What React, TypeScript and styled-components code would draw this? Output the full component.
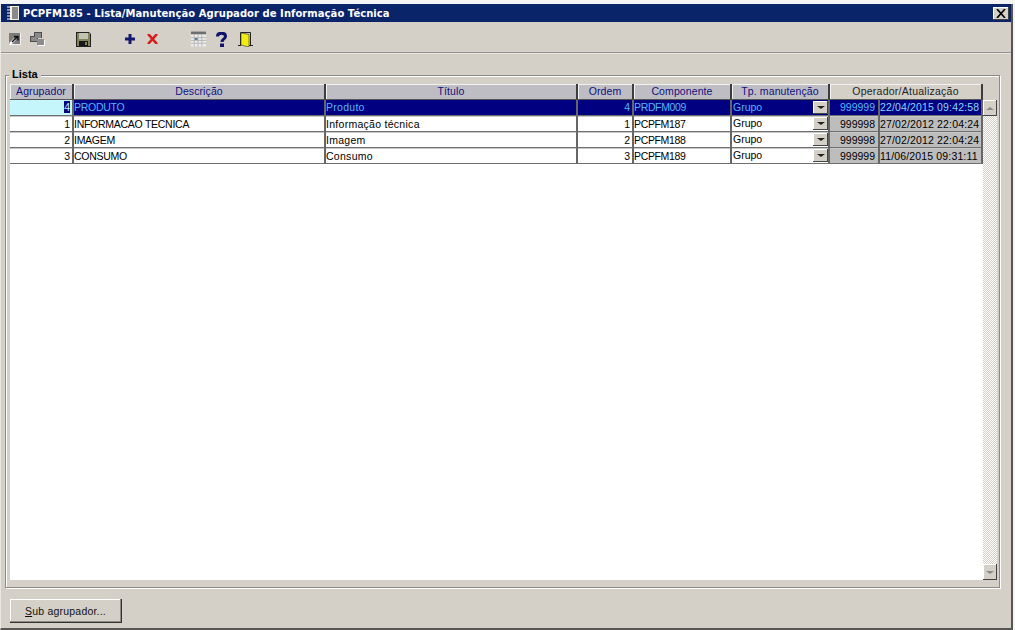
import React from "react";
import styled, { createGlobalStyle } from "styled-components";

const Global = createGlobalStyle`
  html, body { margin: 0; padding: 0; background: #f4f4f4; }
  body { width: 1015px; height: 630px; overflow: hidden; font-family: "Liberation Sans", Arial, sans-serif; }
`;

const Screen = styled.div`
  width: 1015px; height: 630px; display: flex; flex-direction: column;
  box-sizing: border-box; padding-top: 4px; background: #f4f4f4;
`;
const Window = styled.div`
  width: 1013px; height: 626px; box-sizing: border-box; display: flex; flex-direction: column;
  border-right: 2px solid #555; border-bottom: 2px solid #555; border-left: 1px solid #e8e6e0;
  background: #d4d0c8;
`;
const TitleBar = styled.div`
  height: 18px; flex: none; display: flex; align-items: center; gap: 3px; padding: 0 2px 0 6px;
  background: #0a246a; color: #fff; font: bold 10px "DejaVu Sans", sans-serif;
`;
const TitleText = styled.span` flex: 1; white-space: nowrap; letter-spacing: 0.05px; `;
const CloseButton = styled.div`
  width: 16px; height: 13px; display: flex; align-items: center; justify-content: center;
  background: #d4d0c8; box-shadow: inset -1px -1px 0 #404040, inset 1px 1px 0 #fff;
`;
const Toolbar = styled.div`
  height: 26px; flex: none; display: flex; align-items: center; padding: 4px 0 0 6px;
  border-bottom: 2px groove #e8e6e0; box-sizing: content-box;
`;
const ToolIcon = styled.span<{ $gap?: number }>`
  display: flex; width: 15px; height: 16px; align-items: center; justify-content: center;
  margin-left: ${p => p.$gap ?? 0}px;
`;
const Body = styled.div`
  flex: 1; min-height: 0; display: flex; flex-direction: column; padding: 21px 11px 0 4px;
`;
const Group = styled.div`
  flex: 1; min-height: 0; padding: 8px 2px 7px 4px; display: flex; flex-direction: column; position: relative;
  border: 1px solid #8c8a84; box-shadow: 1px 1px 0 #fff, inset 1px 1px 0 #fff;
`;
const Legend = styled.span`
  position: absolute; top: -7px; left: 3px; padding: 0 3px; background: #d4d0c8;
  font: bold 11px/11px "Liberation Sans", sans-serif; color: #000;
`;
const Grid = styled.div` flex: 1; min-height: 0; display: flex; flex-direction: column; position: relative; `;
const Rows = styled.div` flex: 1; min-height: 0; background: #fff; `;
const Row = styled.div`
  display: grid; height: 16px;
  grid-template-columns: 64px 252px 252px 56px 98px 98px 50px 103px;
`;
const Head = styled.div<{ $plain?: boolean }>`
  background: ${p => (p.$plain ? "#d4d0c8" : "#bfbdc4")};
  color: ${p => (p.$plain ? "#222" : "#10107c")};
  font-size: 10.5px; line-height: 15px; text-align: center; white-space: nowrap; letter-spacing: 0.1px;
  border-right: 2px solid #3c3c3c; border-bottom: 1px solid #555; box-sizing: border-box;
  box-shadow: inset 1px 1px 0 #f2f2f2;
`;
const SpanHead = styled(Head)` grid-column: span 2; letter-spacing: 0.25px; `;
const Cell = styled.div<{ $right?: boolean; $sel?: boolean; $cur?: boolean; $ro?: boolean }>`
  box-sizing: border-box; white-space: nowrap; overflow: hidden; font-size: 10.5px;
  line-height: ${p => (p.$sel || p.$cur ? 15 : 16)}px;
  padding: 0 ${p => (p.$ro ? 3 : 2)}px 0 0; text-align: ${p => (p.$right ? "right" : "left")};
  color: ${p => (p.$sel ? "#58b4fa" : "#000")};
  background: ${p => (p.$cur ? "#c4f6fc" : p.$sel ? "#000080" : p.$ro ? "#bdbdbd" : "#fff")};
  border-right: 2px solid #666; border-bottom: 1px solid #707070;
  box-shadow: ${p => (p.$sel || p.$cur ? "none" : "inset 0 1px 0 #c8c8c8")};
`;
const CapsCell = styled(Cell)` letter-spacing: -0.27px; `;
const TextCell = styled(Cell)` letter-spacing: 0.28px; `;
const CodeCell = styled(Cell)` letter-spacing: -0.35px; `;
const DateCell = styled(Cell)` letter-spacing: 0.15px; padding-right: 0; color: ${p => (p.$sel ? "#8ad6ff" : "#000")}; `;
const LastDigit = styled.span` background: #000080; color: #c4f6fc; `;
const ComboCell = styled(Cell)`
  display: flex; justify-content: space-between; padding: 0 0 0 1px; line-height: 14px;
`;
const ComboButton = styled.span`
  width: 15px; height: 13px; margin-top: 1px; flex: none; display: flex; align-items: center; justify-content: center;
  background: #d4d0c8; box-shadow: inset -1px -1px 0 #444, inset 1px 1px 0 #fff;
`;
const Arrow = styled.span`
  width: 0; height: 0; border-left: 4px solid transparent; border-right: 4px solid transparent; border-top: 3px solid #222;
`;
const Scroll = styled.div`
  position: absolute; right: 0; top: 16px; bottom: 0; width: 14px;
  display: flex; flex-direction: column; justify-content: space-between;
  background: repeating-conic-gradient(#fff 0% 25%, #d4d0c8 0% 50%) 0 0 / 2px 2px;
`;
const ScrollButton = styled.span`
  height: 16px; display: flex; align-items: center; justify-content: center;
  background: #d4d0c8; box-shadow: inset -1px -1px 0 #444, inset 1px 1px 0 #fff;
`;
const ArrowUp = styled(Arrow)` border-top: 0; border-bottom: 3px solid #888; `;
const ArrowDown = styled(Arrow)` border-top-color: #888; `;
const Footer = styled.div` flex: none; height: 40px; box-sizing: border-box; padding: 11px 0 0 5px; `;
const Button = styled.button`
  display: block; width: 112px; height: 24px; padding: 0 1px 0 0; background: #d4d0c8; border: 0; color: #111;
  font: 10.5px "Liberation Sans", sans-serif; letter-spacing: 0.02em;
  box-shadow: inset -1px -1px 0 #333, inset -2px -2px 0 #8c8a84, inset 1px 1px 0 #fff;
`;
const Key = styled.span` text-decoration: underline; `;

const rows = [
  ["4", "PRODUTO", "Produto", "4", "PRDFM009", "999999", "22/04/2015 09:42:58"],
  ["1", "INFORMACAO TECNICA", "Informação técnica", "1", "PCPFM187", "999998", "27/02/2012 22:04:24"],
  ["2", "IMAGEM", "Imagem", "2", "PCPFM188", "999998", "27/02/2012 22:04:24"],
  ["3", "CONSUMO", "Consumo", "3", "PCPFM189", "999999", "11/06/2015 09:31:11"],
];

export default function App() {
  return (
    <Screen>
      <Global />
      <Window>
        <TitleBar>
          <svg width="13" height="16" viewBox="0 0 13 16">
            <rect x="2.500" y="0.500" width="10" height="15" fill="#f0f0e8" stroke="#222" />
            <path d="M5 3h6M5 5h6M5 7h6M5 9h6M5 11h6M5 13h6" stroke="#222" />
            <path d="M0 2h4M0 5h4M0 8h4M0 11h4M0 14h4" stroke="#fff" />
          </svg>
          <TitleText>PCPFM185 - Lista/Manutenção Agrupador de Informação Técnica</TitleText>
          <CloseButton>
            <svg width="10" height="9" viewBox="0 0 10 9"><path d="M1 0l8 9M9 0L1 9" stroke="#000" strokeWidth="1.7" /></svg>
          </CloseButton>
        </TitleBar>
        <Toolbar>
          <ToolIcon>
            <svg width="12" height="12" viewBox="0 0 12 12">
              <rect width="12" height="12" fill="#f0f0f0" />
              <rect width="11" height="11" fill="#7c7c7c" />
              <path d="M1 11L6 6" stroke="#fff" strokeWidth="2.500" />
              <path d="M3 9L8 4M5 3.500h4v4" stroke="#111" strokeWidth="1.500" fill="none" />
            </svg>
          </ToolIcon>
          <ToolIcon $gap={8}>
            <svg width="15" height="14" viewBox="0 0 15 14">
              <path d="M0 4h4V0h8v6H8v4H0z" fill="#4c4c4c" />
              <path d="M1 5h4V1h6v5H7v3H1z" fill="#8a8a8a" />
              <path d="M15 14H8v-1h6V8h1z" fill="#fff" />
              <rect x="7" y="7" width="7" height="6" fill="#8c8c8c" />
            </svg>
          </ToolIcon>
          <ToolIcon $gap={31}>
            <svg width="15" height="15" viewBox="0 0 15 15">
              <path d="M0 0h13l2 2v13H0z" fill="#222" />
              <rect x="1" y="1" width="13" height="13" fill="#84845a" />
              <rect x="3" y="1" width="9" height="6" fill="#c4c4b4" />
              <rect x="3" y="9" width="9" height="5" fill="#181818" />
              <rect x="9" y="10" width="2" height="3" fill="#84845a" />
            </svg>
          </ToolIcon>
          <ToolIcon $gap={31}>
            <svg width="10" height="10" viewBox="0 0 10 10"><path d="M5 0v10M0 5h10" stroke="#14186e" strokeWidth="3" /></svg>
          </ToolIcon>
          <ToolIcon $gap={8}>
            <svg width="11" height="10" viewBox="0 0 11 10"><path d="M1 0l9 10M10 0L1 10" stroke="#d81c1c" strokeWidth="2.600" /></svg>
          </ToolIcon>
          <ToolIcon $gap={31}>
            <svg width="16" height="16" viewBox="0 0 16 16">
              <rect width="16" height="16" fill="#ececec" /><rect width="16" height="3" fill="#6e6e6e" />
              <path d="M0 6.500h16M0 9.500h16M0 12.500h16M3.500 3v13M7.500 3v13M11.500 3v13" stroke="#b4b4b4" />
              <rect x="4" y="7" width="3" height="2" fill="#4a7a9f" />
            </svg>
          </ToolIcon>
          <ToolIcon $gap={8}>
            <svg width="11" height="15" viewBox="0 0 11 15">
              <path d="M1.500 4.500C1.500 2 3 1.200 5.500 1.200S9.500 2.500 9.500 4.500C9.500 7 6 6.800 6 10" stroke="#10146a" strokeWidth="3" fill="none" />
              <rect x="4" y="11.500" width="4" height="3.500" fill="#10146a" />
            </svg>
          </ToolIcon>
          <ToolIcon $gap={9}>
            <svg width="15" height="15" viewBox="0 0 15 15">
              <path d="M2.500 13V0.500h10V13" fill="none" stroke="#222" />
              <path d="M3 1l8 1.500V15L3 13z" fill="#f2ee10" stroke="#333" strokeWidth="0.600" />
              <path d="M0 13.500h3M11 13.500h4" stroke="#222" />
            </svg>
          </ToolIcon>
        </Toolbar>
        <Body>
          <Group>
            <Legend>Lista</Legend>
            <Grid>
              <Row>
                <Head>Agrupador</Head><Head>Descrição</Head><Head>Título</Head><Head>Ordem</Head>
                <Head>Componente</Head><Head>Tp. manutenção</Head><SpanHead $plain>Operador/Atualização</SpanHead>
              </Row>
              <Rows>
                {rows.map((r, i) => {
                  const sel = i === 0;
                  return (
                    <Row key={r[0]}>
                      <Cell $right $cur={sel}>{sel ? <LastDigit>{r[0]}</LastDigit> : r[0]}</Cell>
                      <CapsCell $sel={sel}>{r[1]}</CapsCell>
                      <TextCell $sel={sel}>{r[2]}</TextCell>
                      <Cell $right $sel={sel}>{r[3]}</Cell>
                      <CodeCell $sel={sel}>{r[4]}</CodeCell>
                      <ComboCell $sel={sel}>Grupo<ComboButton><Arrow /></ComboButton></ComboCell>
                      <Cell $right $sel={sel} $ro>{r[5]}</Cell>
                      <DateCell $sel={sel} $ro>{r[6]}</DateCell>
                    </Row>
                  );
                })}
              </Rows>
              <Scroll>
                <ScrollButton><ArrowUp /></ScrollButton>
                <ScrollButton><ArrowDown /></ScrollButton>
              </Scroll>
            </Grid>
          </Group>
          <Footer><Button><Key>S</Key>ub agrupador...</Button></Footer>
        </Body>
      </Window>
    </Screen>
  );
}
